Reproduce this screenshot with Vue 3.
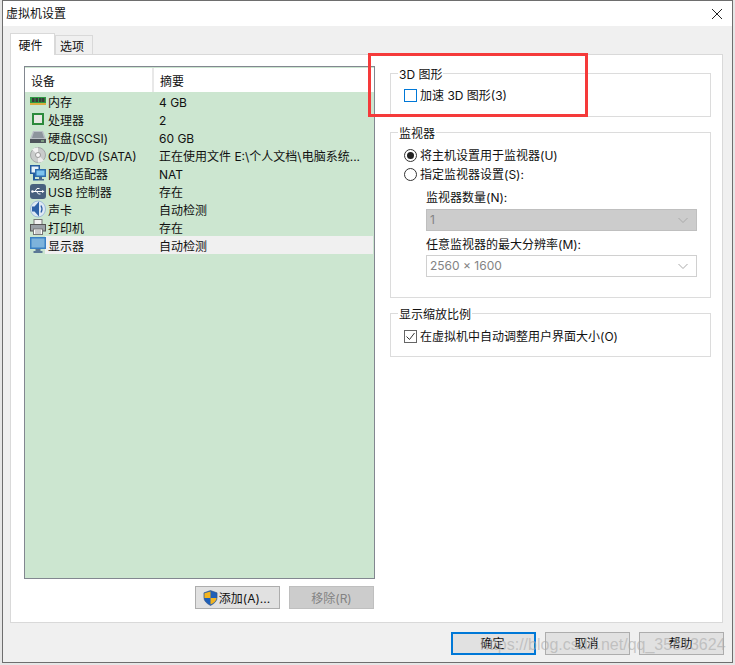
<script setup>
const rows = [
  { id: 'mem', name: '内存', val: '4 GB' },
  { id: 'cpu', name: '处理器', val: '2' },
  { id: 'hdd', name: '硬盘(SCSI)', val: '60 GB' },
  { id: 'cd', name: 'CD/DVD (SATA)', val: '正在使用文件 E:\\个人文档\\电脑系统...' },
  { id: 'net', name: '网络适配器', val: 'NAT' },
  { id: 'usb', name: 'USB 控制器', val: '存在' },
  { id: 'snd', name: '声卡', val: '自动检测' },
  { id: 'prn', name: '打印机', val: '存在' },
  { id: 'mon', name: '显示器', val: '自动检测', on: true },
]
</script>

<template>
  <div class="desk">
    <div class="win">
      <div class="title">
        <span class="ttext">虚拟机设置</span>
        <svg width="12" height="12" viewBox="0 0 12 12"><path d="M1 1l10 10M11 1L1 11" stroke="#222" fill="none"/></svg>
      </div>
      <div class="body">
        <div class="tabs">
          <div class="tab on">硬件</div>
          <div class="tab">选项</div>
        </div>
        <div class="panel">
          <div class="left">
            <div class="list">
              <div class="lhead"><div class="c1">设备</div><div class="c2">摘要</div></div>
              <div v-for="r in rows" :key="r.id" class="row">
                <svg class="ico" width="18" height="18" viewBox="0 0 18 18">
                  <g v-if="r.id==='mem'">
                    <rect x="1" y="5" width="16" height="6" fill="#2f9a43"/>
                    <rect x="1" y="11" width="16" height="2" fill="#d9ad3f"/>
                    <path d="M3 6h2.500v4H3zM6.500 6H9v4H6.500zM10 6h2.500v4H10zM13 6h2.500v4H13z" fill="#3a3a3a"/>
                  </g>
                  <g v-else-if="r.id==='cpu'">
                    <rect x="3" y="3" width="12" height="12" fill="#2c8a3c"/>
                    <rect x="5" y="5" width="8" height="8" fill="#e8e8e4"/>
                  </g>
                  <g v-else-if="r.id==='hdd'">
                    <path d="M4 3h10l3 8H1z" fill="#b9bfc5"/>
                    <path d="M5 4h8l2 6H3z" fill="#8d959d"/>
                    <rect x="1" y="11" width="16" height="4" fill="#4f565d"/>
                    <rect x="12" y="12.500" width="3" height="1" fill="#a8e0a0"/>
                  </g>
                  <g v-else-if="r.id==='cd'">
                    <circle cx="9" cy="9" r="7.500" fill="#c9cccb" stroke="#a3a8a8"/>
                    <path d="M9 9L3 3.500A8 8 0 0 1 9 1.500z" fill="#f2f2f2"/>
                    <path d="M9 9l6 5.500A8 8 0 0 1 9 16.500z" fill="#ececec"/>
                    <circle cx="9" cy="9" r="2.500" fill="#f7f7f7" stroke="#999"/>
                  </g>
                  <g v-else-if="r.id==='net'">
                    <rect x="1" y="1" width="10" height="9" fill="#245c9e"/>
                    <rect x="2.500" y="2.500" width="7" height="6" fill="#e4f1fa"/>
                    <path d="M4 10h2v5h3v1.500H4z" fill="#245c9e"/>
                    <rect x="6" y="5" width="11" height="8" fill="#2d6fb0"/>
                    <rect x="7.500" y="6.500" width="8" height="5" fill="#7cc3ee"/>
                    <path d="M10 13h3v2h2v1.500H9V15h1z" fill="#4a6a8c"/>
                  </g>
                  <g v-else-if="r.id==='usb'">
                    <rect x="1" y="2" width="16" height="15" rx="3" fill="#48617e"/>
                    <path d="M3.500 9.500h10M6 9.500l2-3h2.500M7.500 9.500l2 2.500h2" stroke="#fff" fill="none"/>
                    <path d="M13 8l2.500 1.500L13 11z" fill="#fff"/>
                    <circle cx="3.500" cy="9.500" r="1.300" fill="#fff"/>
                  </g>
                  <g v-else-if="r.id==='snd'">
                    <ellipse cx="9" cy="9" rx="7.500" ry="8" fill="#dfe9f4" stroke="#8fb0d4" stroke-width=".8"/>
                    <path d="M3 6.500h2.500L10 1.500v15l-4.500-5H3z" fill="#2f62a8"/>
                    <path d="M12 5.500q2 3.500 0 7" stroke="#2f62a8" stroke-width="1.300" fill="none"/>
                  </g>
                  <g v-else-if="r.id==='prn'">
                    <rect x="5" y="1.500" width="8" height="5" fill="#f2f2f2" stroke="#777"/>
                    <rect x="1.500" y="6.500" width="15" height="6.500" fill="#9aa0a6" stroke="#555"/>
                    <rect x="4.500" y="11" width="9" height="5.500" fill="#fff" stroke="#777"/>
                    <path d="M6 13h6M6 15h6" stroke="#999"/>
                  </g>
                  <g v-else>
                    <rect x="1" y="1" width="16" height="12" fill="#3a80c4"/>
                    <rect x="2.500" y="2.500" width="13" height="9" fill="#7db3dc"/>
                    <path d="M6.500 13h5v2h2v2H4.500v-2h2z" fill="#5b7896"/>
                  </g>
                </svg>
                <div class="cname" :class="{ band: r.on }">{{ r.name }}</div>
                <div class="cval" :class="{ band: r.on }">{{ r.val }}</div>
              </div>
            </div>
            <div class="lbtns">
              <div class="btn add">
                <svg width="15" height="16" viewBox="0 0 16 17"><path d="M8 .5l7 2.500v5q0 5-7 8.500Q1 13 1 8V3z" fill="#1f5fb8" stroke="#33507a" stroke-width=".6"/><path d="M8 1.500v7H1.500V3.500zM8 8.500h6.500q-.5 4.500-6.500 7z" fill="#f3b41f"/></svg>
                <span>添加(A)...</span>
              </div>
              <div class="btn dis">移除(R)</div>
            </div>
          </div>
          <div class="right">
            <fieldset class="grp g3d">
              <legend>3D 图形</legend>
              <label class="check"><span class="cb focus"></span>加速 3D 图形(3)</label>
            </fieldset>
            <fieldset class="grp gmon">
              <legend>监视器</legend>
              <div class="radio"><span class="rb on"></span>将主机设置用于监视器(U)</div>
              <div class="radio r2"><span class="rb"></span>指定监视器设置(S):</div>
              <div class="sub">
                <div class="lab">监视器数量(N):</div>
                <div class="combo gray"><span>1</span><svg width="12" height="7" viewBox="0 0 12 7"><path d="M1.500 1l4.500 4.500L10.500 1" stroke="#aaa" fill="none"/></svg></div>
                <div class="lab l2">任意监视器的最大分辨率(M):</div>
                <div class="combo c-b"><span>2560 x 1600</span><svg width="12" height="7" viewBox="0 0 12 7"><path d="M1.500 1l4.500 4.500L10.500 1" stroke="#aaa" fill="none"/></svg></div>
              </div>
            </fieldset>
            <fieldset class="grp gscale">
              <legend>显示缩放比例</legend>
              <label class="check"><span class="cb soft"><svg width="11" height="11" viewBox="0 0 11 11"><path d="M1.500 5.500l3 3 5-6.500" stroke="#333" fill="none"/></svg></span>在虚拟机中自动调整用户界面大小(O)</label>
            </fieldset>
          </div>
        </div>
        <div class="foot">
          <div class="btn big def">确定</div>
          <div class="btn big">取消</div>
          <div class="btn big">帮助</div>
        </div>
      </div>
    </div>
    <div class="redbox"></div>
    <div class="mark">https://blog.csdn.net/qq_35813624</div>
  </div>
</template>

<style scoped>
.desk { position: relative; width: 735px; height: 665px; overflow: hidden; background: #e6e6e6; font: 12px/18px Inter, "Noto Sans CJK SC", sans-serif; color: #111; }
.win { margin-left: 2px; width: 731px; height: 663px; box-sizing: border-box; border: 1px solid #6e6e6e; display: flex; flex-direction: column; background: #f0f0f0; }
.title { height: 25px; flex: none; background: #fff; display: flex; align-items: center; justify-content: space-between; padding: 0 9px 0 3px; }
.ttext { padding-top: 1px; }
.body { flex: 1; display: flex; flex-direction: column; padding: 7px 9px 0 7px; }
.tabs { display: flex; align-items: flex-end; height: 21px; }
.tab { height: 19px; width: 38px; padding-right: 4px; line-height: 22px; text-align: center; border: 1px solid #d9d9d9; border-bottom: 0; box-sizing: border-box; }
.tab.on { height: 22px; width: 45px; margin-bottom: -1px; background: #fff; line-height: 24px; position: relative; }
.panel { height: 569px; box-sizing: border-box; background: #fff; border: 1px solid #d9d9d9; display: flex; padding: 11px 11px 0 13px; gap: 15px; }
.left { width: 351px; flex: none; }
.list { height: 513px; box-sizing: border-box; border: 1px solid #828790; background: #cce6d0; padding-top: 1px; }
.lhead { height: 24px; background: #fff; display: flex; line-height: 27px; }
.c1 { width: 121px; padding-left: 6px; border-right: 2px solid #e8e8e8; }
.c2 { padding-left: 6px; }
.row { height: 18px; display: flex; align-items: center; padding-left: 4px; }
.ico { flex: none; position: relative; z-index: 1; }
.cname { width: 111px; height: 18px; flex: none; box-sizing: content-box; margin-left: -2px; padding-left: 3px; line-height: 21px; }
.cval { flex: 1; height: 18px; white-space: nowrap; overflow: hidden; margin-right: 1px; line-height: 21px; }
.band { background: #f0f0f0; }
.lbtns { display: flex; justify-content: flex-end; gap: 9px; margin-top: 7px; padding-right: 1px; }
.btn { box-sizing: border-box; display: flex; align-items: center; justify-content: center; background: #e1e1e1; border: 1px solid #adadad; height: 23px; }
.add { width: 85px; padding: 1px 2px 0 0; }
.add span { padding-top: 2px; }
.add svg { margin-right: 1px; }
.dis { width: 85px; padding-top: 3px; background: #ccc; color: #838383; border-color: #bfbfbf; }
.right { flex: 1; display: flex; flex-direction: column; }
.grp { margin: 0; padding: 0 0 0 7px; border: 1px solid #dcdcdc; box-sizing: border-box; min-width: 0; }
.grp legend { padding: 0 1px; height: 20px; line-height: 24px; }
.g3d { height: 54px; margin-top: -3px; }
.gmon { height: 176px; margin-top: 5px; }
.gscale { height: 54px; margin-top: 5px; }
.check { display: flex; align-items: center; height: 18px; box-sizing: border-box; padding-top: 2px; gap: 3px; margin: 3px 0 0 6px; }
.gscale .check { margin-top: 4px; }
.cb { width: 13px; height: 13px; margin-top: -2px; box-sizing: border-box; border: 1px solid #333; background: #fff; display: flex; align-items: center; justify-content: center; }
.cb.focus { border-color: #0078d7; }
.cb.soft { border-color: #666; }
.radio { display: flex; align-items: center; height: 18px; box-sizing: border-box; padding-top: 2px; gap: 3px; margin: 4px 0 0 6px; }
.r2 { margin-top: 1px; }
.rb { width: 13px; height: 13px; margin-top: -2px; border: 1px solid #333; box-sizing: border-box; border-radius: 50%; display: flex; align-items: center; justify-content: center; }
.rb.on::after { content: ""; width: 7px; height: 7px; border-radius: 50%; background: #222; }
.sub { margin: 6px 13px 0 28px; }
.lab { height: 18px; }
.l2 { margin-top: 5px; }
.combo { height: 22px; box-sizing: border-box; border: 1px solid #d0d0d0; margin-top: 2px; display: flex; align-items: center; justify-content: space-between; padding: 0 7px 0 3px; color: #838383; }
.combo.c-b { margin-top: 1px; }
.combo.gray { background: #ccc; border-color: #bfbfbf; }
.foot { display: flex; justify-content: flex-end; gap: 9px; margin: 9px -1px 0 0; }
.big { width: 85px; height: 23px; padding: 1px 2px 0 0; }
.def { border: 2px solid #0078d7; }
.redbox { position: absolute; left: 368px; top: 53px; width: 220px; height: 64px; box-sizing: border-box; border: 3px solid #f53a3a; }
.mark { position: absolute; left: 480px; top: 633px; font: 16px/24px "Liberation Sans", sans-serif; color: rgba(170,170,170,.6); white-space: nowrap; }
</style>

<style>
html, body { margin: 0; background: #e6e6e6; }
</style>
